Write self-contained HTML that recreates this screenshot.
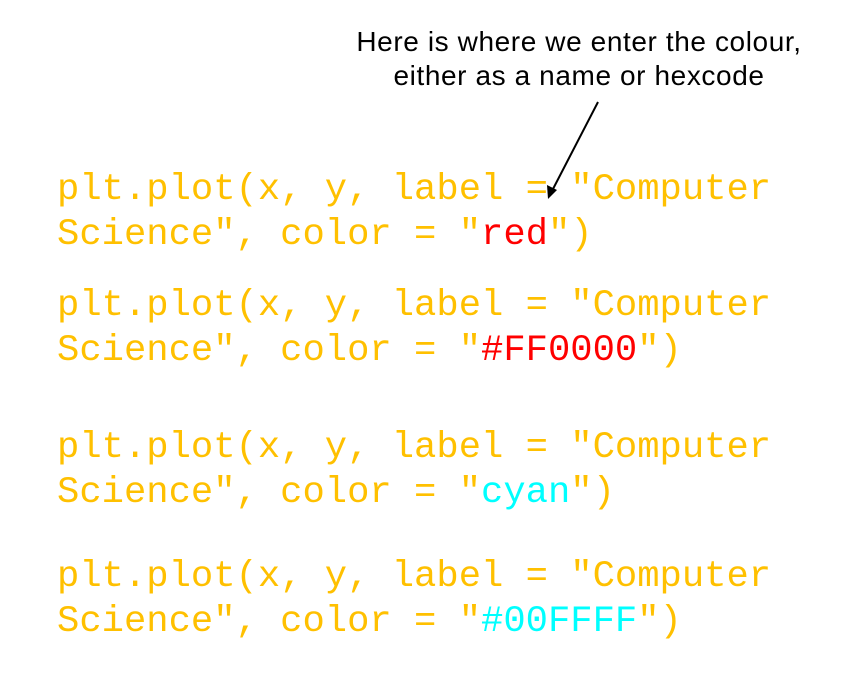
<!DOCTYPE html>
<html><head><style>
html,body{margin:0;padding:0;background:#fff;width:866px;height:696px;overflow:hidden;position:relative}
.c{position:absolute;left:57px;font-family:"Liberation Mono",monospace;font-size:37.2px;line-height:45px;color:#FFC000;white-space:pre}
.r{color:#FF0000}.y{color:#00FFFF}
.n{position:absolute;left:250px;width:658px;text-align:center;font-family:"Liberation Sans",sans-serif;font-size:28px;letter-spacing:0.6px;line-height:34px;color:#000;top:25px}
</style></head><body>
<div class="n">Here is where we enter the colour,<br>either as a name or hexcode</div>
<svg style="position:absolute;left:0;top:0" width="866" height="696">
<line x1="598" y1="102" x2="553" y2="189" stroke="#000" stroke-width="2"/>
<polygon points="548,199 547,185 557,190" fill="#000"/>
</svg>
<div class="c" style="top:168px">plt.plot(x, y, label = "Computer
Science", color = "<span class="r">red</span>")</div>
<div class="c" style="top:284px">plt.plot(x, y, label = "Computer
Science", color = "<span class="r">#FF0000</span>")</div>
<div class="c" style="top:426px">plt.plot(x, y, label = "Computer
Science", color = "<span class="y">cyan</span>")</div>
<div class="c" style="top:555px">plt.plot(x, y, label = "Computer
Science", color = "<span class="y">#00FFFF</span>")</div>
</body></html>
